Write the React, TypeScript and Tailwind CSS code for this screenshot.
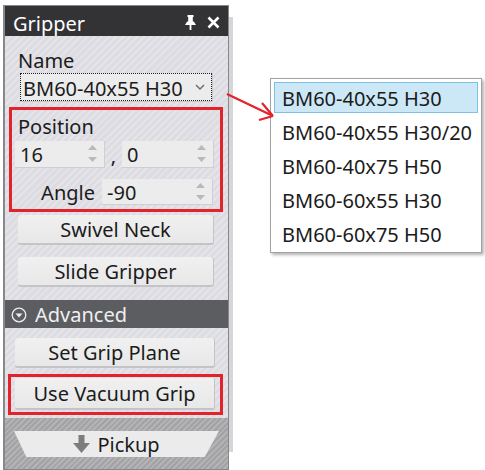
import React from 'react'

const stripes =
  'bg-[repeating-linear-gradient(135deg,#dcdce2_0px,#dcdce2_3px,#e5e5e9_3px,#e5e5e9_5px)]'

function SpinArrows() {
  return (
    <div className="flex flex-col items-center gap-[7px] mr-[7px]">
      <svg width="9" height="5" viewBox="0 0 9 5">
        <polygon points="0,5 4.5,0 9,5" fill="#b9b9bb" />
      </svg>
      <svg width="9" height="5" viewBox="0 0 9 5">
        <polygon points="0,0 4.5,5 9,0" fill="#b9b9bb" />
      </svg>
    </div>
  )
}

function Spinner({ value, className }: { value: string; className: string }) {
  return (
    <div
      className={[
        'flex items-center justify-between bg-[#ececed] border-r border-b border-[#cfcfd2] pl-[5px]',
        className
      ].join(' ')}
    >
      <span className="leading-[24px] pt-[3px]">{value}</span>
      <SpinArrows />
    </div>
  )
}

function Button({ label, className }: { label: string; className: string }) {
  return (
    <div
      className={[
        'flex items-center justify-center rounded-[3px] bg-[linear-gradient(#f0f0f0,#e8e8e8)] border-b-[2px] border-r border-[#c4c4c8] leading-[24px]',
        className
      ].join(' ')}
    >
      <span className="pt-[2px]">{label}</span>
    </div>
  )
}

export default function App() {
  return (
    <div className="relative w-[485px] h-[470px] bg-white overflow-hidden font-['Noto_Sans',sans-serif] text-[20px] text-[#1b1b1b]">
      <div className="flex">
        {/* Panel */}
        <div className="ml-[3px] mt-[5px] w-[226px] border border-l-2 border-[#88888c] flex flex-col">
          {/* Title */}
          <div className="h-[30px] bg-[#333335] flex items-start pt-[6px] pl-[8px] pr-[8px] text-white">
            <span className="leading-[24px] flex-1">Gripper</span>
            <div className="flex items-center gap-[11px] mt-[3px]">
              <svg width="11" height="15" viewBox="0 0 11 15">
                <rect x="2.5" y="0" width="6" height="2" fill="#fff" />
                <rect x="3.2" y="1" width="4.6" height="6" fill="#fff" />
                <polygon points="0,10 2.2,6.5 8.8,6.5 11,10" fill="#fff" />
                <rect x="4.6" y="10" width="1.8" height="5" fill="#fff" />
              </svg>
              <svg width="13" height="13" viewBox="0 0 13 13">
                <path d="M1.5 1.5L11.5 11.5M11.5 1.5L1.5 11.5" stroke="#fff" strokeWidth="2.6" />
              </svg>
            </div>
          </div>

          {/* Body */}
          <div className={['flex flex-col pt-[13px] pb-[3px]', stripes].join(' ')}>
            <div className="ml-[13px] leading-[24px]">Name</div>
            <div className="ml-[15px] w-[193px] h-[29px] bg-[#ececed] border-r border-b border-[#c8c8cc]">
              <div className="h-full border border-dotted border-[#222] flex items-center justify-between pl-[2px] pr-[6px]">
                <span className="leading-[24px] pt-[3px]">BM60-40x55 H30</span>
                <svg width="10" height="6" viewBox="0 0 10 6">
                  <path d="M1 1L5 5L9 1" fill="none" stroke="#6a6a6a" strokeWidth="1.4" />
                </svg>
              </div>
            </div>

            {/* Position group */}
            <div className="ml-[4px] mt-[5px] w-[214px] border-[3px] border-[#e3222a] flex flex-col pt-[5px] pb-[4px]">
              <div className="ml-[6px] leading-[24px]">Position</div>
              <div className="flex items-center mt-[1px] ml-[3px]">
                <Spinner value="16" className="w-[90px] h-[27px]" />
                <span className="w-[17px] text-center leading-[24px] pt-[4px]">,</span>
                <Spinner value="0" className="w-[92px] h-[27px]" />
              </div>
              <div className="flex items-center mt-[10px] ml-[3px]">
                <span className="w-[87px] pr-[7px] text-right leading-[24px] pt-[3px]">Angle</span>
                <Spinner value="-90" className="w-[111px] h-[26px]" />
              </div>
            </div>

            <Button label="Swivel Neck" className="ml-[13px] mt-[3px] w-[196px] h-[30px]" />
            <Button label="Slide Gripper" className="ml-[13px] mt-[12px] w-[196px] h-[30px]" />

            {/* Advanced */}
            <div className="mt-[13px] h-[28px] bg-[#5c5d61] text-[#efeff0] flex items-start pt-[3px] pl-[6px]">
              <svg width="16" height="16" viewBox="0 0 16 16" className="mt-[4px]">
                <circle cx="8" cy="8" r="6.8" fill="none" stroke="#efeff0" strokeWidth="1.3" />
                <polygon points="4.5,6.5 11.5,6.5 8,10.5" fill="#efeff0" />
              </svg>
              <span className="ml-[8px] leading-[24px]">Advanced</span>
            </div>

            <Button label="Set Grip Plane" className="ml-[10px] mt-[10px] w-[200px] h-[30px]" />
            <div className="ml-[3px] mt-[6px] w-[215px] border-[3px] border-[#e3222a] pt-[1px] pb-[2px]">
              <Button label="Use Vacuum Grip" className="ml-[4px] w-[200px] h-[32px]" />
            </div>
          </div>

          {/* Bottom */}
          <div className="h-[51px] bg-[repeating-linear-gradient(135deg,#a3a3a5_0px,#a3a3a5_2px,#b3b3b5_2px,#b3b3b5_4px)] pt-[13px]">
            <div className="ml-[9px] w-[205px] h-[26px] bg-[#ebebec] [clip-path:polygon(0_0,100%_0,93%_100%,6%_100%)] flex items-center justify-center gap-[7px]">
              <svg width="17" height="18" viewBox="0 0 17 18">
                <rect x="5.5" y="0" width="6" height="9" fill="#7d7d7f" />
                <polygon points="0,8 17,8 8.5,18" fill="#7d7d7f" />
              </svg>
              <span className="leading-[24px] pt-[2px]">Pickup</span>
            </div>
          </div>
        </div>
        {/* shadow strip */}
        <div className="mt-[17px] w-[4px] h-[435px] bg-[#d6d6d8]" />
      </div>

      {/* Dropdown list */}
      <div className="absolute left-[270px] top-[78px] w-[212px] h-[175px] bg-white border border-[#a3a3a5] shadow-[2px_2px_3px_rgba(0,0,0,0.3)] pt-[3px] pl-[3px] pr-[3px]">
        <div className="h-[31px] mb-[3px] bg-[#cce8f7] border border-[#7fc0e6] flex items-center pl-[7px]">
          <span className="leading-[24px] pt-[2px]">BM60-40x55 H30</span>
        </div>
        {['BM60-40x55 H30/20', 'BM60-40x75 H50', 'BM60-60x55 H30', 'BM60-60x75 H50'].map((t) => (
          <div key={t} className="h-[34px] flex items-center pl-[8px]">
            <span className="leading-[24px]">{t}</span>
          </div>
        ))}
      </div>

      {/* Red arrow */}
      <svg className="absolute left-0 top-0 pointer-events-none" width="485" height="470">
        <path d="M227 94L273 116M262 103L273 116M259 120L273 116" stroke="#e3222a" strokeWidth="2.2" fill="none" />
      </svg>
    </div>
  )
}
